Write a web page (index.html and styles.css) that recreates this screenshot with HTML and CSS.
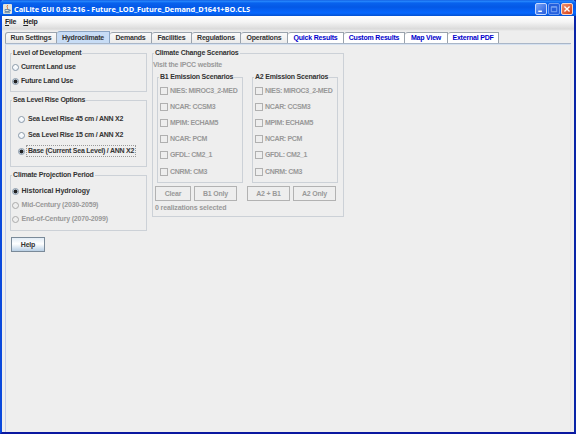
FILE: index.html
```
<!DOCTYPE html>
<html lang="en">
<head>
<meta charset="utf-8">
<title>CalLite GUI</title>
<link rel="stylesheet" href="styles.css">
</head>
<body>
<div class="window">
  <header class="titlebar">
    <svg class="java" viewBox="0 0 9 10"><rect width="9" height="10" rx="1" fill="#e4e5dc"/><path d="M4.8 1C2.6 3 6 3.400 4 5.400" fill="none" stroke="#d97b45"/><path d="M2 5.500h4v2h-4zM6 6h1.300v1H6M1.500 8.700h5.500" fill="none" stroke="#54779b" stroke-width=".8"/></svg>
    <h1>CalLite GUI 0.83.216 - Future_LOD_Future_Demand_D1641+BO.CLS</h1>
    <div class="controls">
      <span class="ctl"><svg viewBox="0 0 11 11"><path d="M2.500 8h4" stroke="#fff" stroke-width="1.600"/></svg></span>
      <span class="ctl dim"><svg viewBox="0 0 11 11"><path d="M2.500 3h6v5.500h-6zM2.500 3.500h6" fill="none" stroke="#82aaf5" stroke-width="1"/></svg></span>
      <span class="ctl close"><svg viewBox="0 0 11 11"><path d="M2.700 2.700l5.600 5.600M8.300 2.700l-5.600 5.600" stroke="#fff" stroke-width="1.500"/></svg></span>
    </div>
  </header>
  <nav class="menu"><span class="m-file"><u>F</u>ile</span><span class="m-help"><u>H</u>elp</span></nav>
  <nav class="tabs">
    <span class="tab t1">Run Settings</span><span class="tab t2 active">Hydroclimate</span><span class="tab t3">Demands</span><span class="tab t4">Facilities</span><span class="tab t5">Regulations</span><span class="tab t6">Operations</span><span class="tab t7 link">Quick Results</span><span class="tab t8 link">Custom Results</span><span class="tab t9 link">Map View</span><span class="tab t10 link">External PDF</span>
  </nav>
  <main class="content">
    <div class="left">
      <section class="group level">
        <h2>Level of Development</h2>
        <div class="opt"><i class="radio"></i><span>Current Land use</span></div>
        <div class="opt"><i class="radio on"></i><span>Future Land Use</span></div>
      </section>
      <section class="group sea">
        <h2>Sea Level Rise Options</h2>
        <div class="opt"><i class="radio"></i><span>Sea Level Rise 45 cm / ANN X2</span></div>
        <div class="opt"><i class="radio"></i><span>Sea Level Rise 15 cm / ANN X2</span></div>
        <div class="opt"><i class="radio on"></i><span class="focus">Base (Current Sea Level) / ANN X2</span></div>
      </section>
      <section class="group period">
        <h2>Climate Projection Period</h2>
        <div class="opt current"><i class="radio on"></i><span>Historical Hydrology</span></div>
        <div class="opt off"><i class="radio"></i><span>Mid-Century (2030-2059)</span></div>
        <div class="opt off"><i class="radio"></i><span>End-of-Century (2070-2099)</span></div>
      </section>
      <button class="help">Help</button>
    </div>
    <section class="group climate">
      <h2>Climate Change Scenarios</h2>
      <p class="visit">Visit the IPCC website</p>
      <div class="pair">
        <section class="group scen">
          <h2>B1 Emission Scenarios</h2>
          <div class="opt off"><i class="box"></i><span>NIES: MIROC3_2-MED</span></div>
          <div class="opt off"><i class="box"></i><span>NCAR: CCSM3</span></div>
          <div class="opt off"><i class="box"></i><span>MPIM: ECHAM5</span></div>
          <div class="opt off"><i class="box"></i><span>NCAR: PCM</span></div>
          <div class="opt off"><i class="box"></i><span>GFDL: CM2_1</span></div>
          <div class="opt off"><i class="box"></i><span>CNRM: CM3</span></div>
        </section>
        <section class="group scen">
          <h2>A2 Emission Scenarios</h2>
          <div class="opt off"><i class="box"></i><span>NIES: MIROC3_2-MED</span></div>
          <div class="opt off"><i class="box"></i><span>NCAR: CCSM3</span></div>
          <div class="opt off"><i class="box"></i><span>MPIM: ECHAM5</span></div>
          <div class="opt off"><i class="box"></i><span>NCAR: PCM</span></div>
          <div class="opt off"><i class="box"></i><span>GFDL: CM2_1</span></div>
          <div class="opt off"><i class="box"></i><span>CNRM: CM3</span></div>
        </section>
      </div>
      <div class="buttons"><button class="clear">Clear</button><button>B1 Only</button><button class="both">A2 + B1</button><button>A2 Only</button></div>
      <p class="count">0 realizations selected</p>
    </section>
  </main>
</div>
</body>
</html>
```
FILE: styles.css
```
* { box-sizing: border-box; }
body { margin: 0; background: #eee; color: #333; font: bold 7px/10px "Liberation Sans", Arial, sans-serif; letter-spacing: -0.2px; }
h1, h2, p { margin: 0; font: inherit; }
.window { width: 576px; height: 434px; display: flex; flex-direction: column; background: #eee; border: solid; border-width: 0 2px 2px; border-color: #0a3fd0 #0a24a8 #0a18a0 #0a48dc; }
.titlebar { height: 16px; margin: 0 -2px; padding: 1px 3px 0 3px; display: flex; align-items: center; flex: none; border-radius: 4px 4px 0 0; background: linear-gradient(#0a50d8 0, #2a8cff 1px, #0862ee 3px, #0458e6 7px, #0668ff 13px, #0350d0 16px); }
.java { width: 9px; height: 10px; margin-right: 2px; }
h1 { flex: 1; color: #fff; font: bold 7.4px/12px "Open Sans", sans-serif; letter-spacing: -0.050px; white-space: nowrap; }
.controls { display: flex; gap: 1px; }
.ctl { width: 12px; height: 12px; border: 1px solid #c4d8ff; border-radius: 2px; background: linear-gradient(135deg, #7ba5f8, #235cdd); display: flex; }
.ctl svg { width: 10px; height: 10px; }
.dim { border-color: #6f9df2; background: #245fdd; }
.close { border-color: #f8d8cc; background: linear-gradient(135deg, #f0926f, #d63c12); }
.menu { height: 16px; flex: none; display: flex; padding: 1px 0 0 3px; gap: 7px; color: #222; background: linear-gradient(#fff, #f4f4f4 6px, #dadada 13px, #eee 15px); }
.menu u { text-underline-offset: 1px; }
.tabs { height: 12px; flex: none; display: flex; align-items: flex-end; margin: 0 3px; border-bottom: 1px solid #a9b6c8; }
.tab { height: 11px; flex: none; text-align: center; white-space: nowrap; border: solid #9aa3ad; border-width: 1px 1px 0 0; border-top-left-radius: 3px; background: linear-gradient(#fafafa, #ebebeb); }
.t1 { border-left-width: 1px; }
.tab.active { height: 12px; padding-top: 1px; background: #c7dcf5; border-color: #8ba5c4; }
.link { color: #0000cc; background: #fff; }
.t1 { width: 52px; }
.t2 { width: 53px; }
.t3 { width: 42px; }
.t4 { width: 40px; }
.t5 { width: 49px; }
.t6 { width: 47px; }
.t7 { width: 56px; }
.t8 { width: 61px; }
.t9 { width: 43px; }
.t10 { width: 51px; }
.content { flex: 1; display: flex; align-items: flex-start; padding: 8px 0 0 4px; margin: 0 3px; border: solid; border-width: 1px 1px 0; border-color: #d5e1f0 #ebe6ea #ebe6ea #c5cdea; }
.left { width: 137px; margin-right: 5px; }
.group { border: 1px solid #ccd1d7; white-space: nowrap; }
.group h2 { width: max-content; height: 10px; margin: -6px 0 0 1px; padding: 0 1px; background: #eee; }
.opt { height: 14px; display: flex; align-items: center; gap: 2px; padding-left: 1px; }
.opt span { line-height: 10px; }
.off, .visit, .count { color: #999; }
.radio { width: 7px; height: 7px; flex: none; border: 1px solid #8999aa; border-radius: 50%; background: linear-gradient(#fff, #edf3fa); }
.radio.on { border-color: #8999aa; background: radial-gradient(#222 0 1.600px, #d5e2ef 2.300px); }
.off .radio { border-color: #aaa; background: #eee; }
.level { height: 39px; }
.level h2 { margin-bottom: 2px; }
.sea { height: 67px; margin-top: 8px; letter-spacing: -0.240px; }
.sea h2 { margin-bottom: 6px; }
.sea .opt { height: 16px; padding-left: 7px; gap: 2px; }
.sea span { padding: 0 1px; }
.focus { outline: 1px dotted #999; }
.period { height: 56px; margin-top: 8px; letter-spacing: -0.180px; }
.period h2 { margin-bottom: 4px; }
.period span { margin-left: 0.500px; }
.current { letter-spacing: 0; }
button { height: 15px; padding: 0; border: 1px solid #b2b2b2; background: #eee; color: #999; font: inherit; letter-spacing: inherit; }
.help { width: 34px; margin: 6px 0 0 1px; color: #333; border-color: #7a8a99; background: linear-gradient(#e2ecf6, #fff 45%, #b8cfe5); }
.climate { width: 192px; height: 164px; }
.visit { margin-top: 2px; height: 11px; }
.pair { display: flex; gap: 9px; margin: 6px 0 0 4px; }
.scen { width: 86px; height: 106px; }
.scen .opt { height: 16.100px; gap: 2px; padding-left: 2px; letter-spacing: -0.340px; }
.scen h2 { margin-bottom: 1px; }
.box { width: 8px; height: 8px; flex: none; border: 1px solid #b0b0b0; }
.buttons { display: flex; gap: 3px; margin: 3px 0 0 2px; }
.buttons button { width: 43px; }
.buttons .clear { width: 36px; }
.buttons .both { margin-left: 7px; }
.count { margin: 2px 0 0 2px; letter-spacing: -0.130px; }
```
